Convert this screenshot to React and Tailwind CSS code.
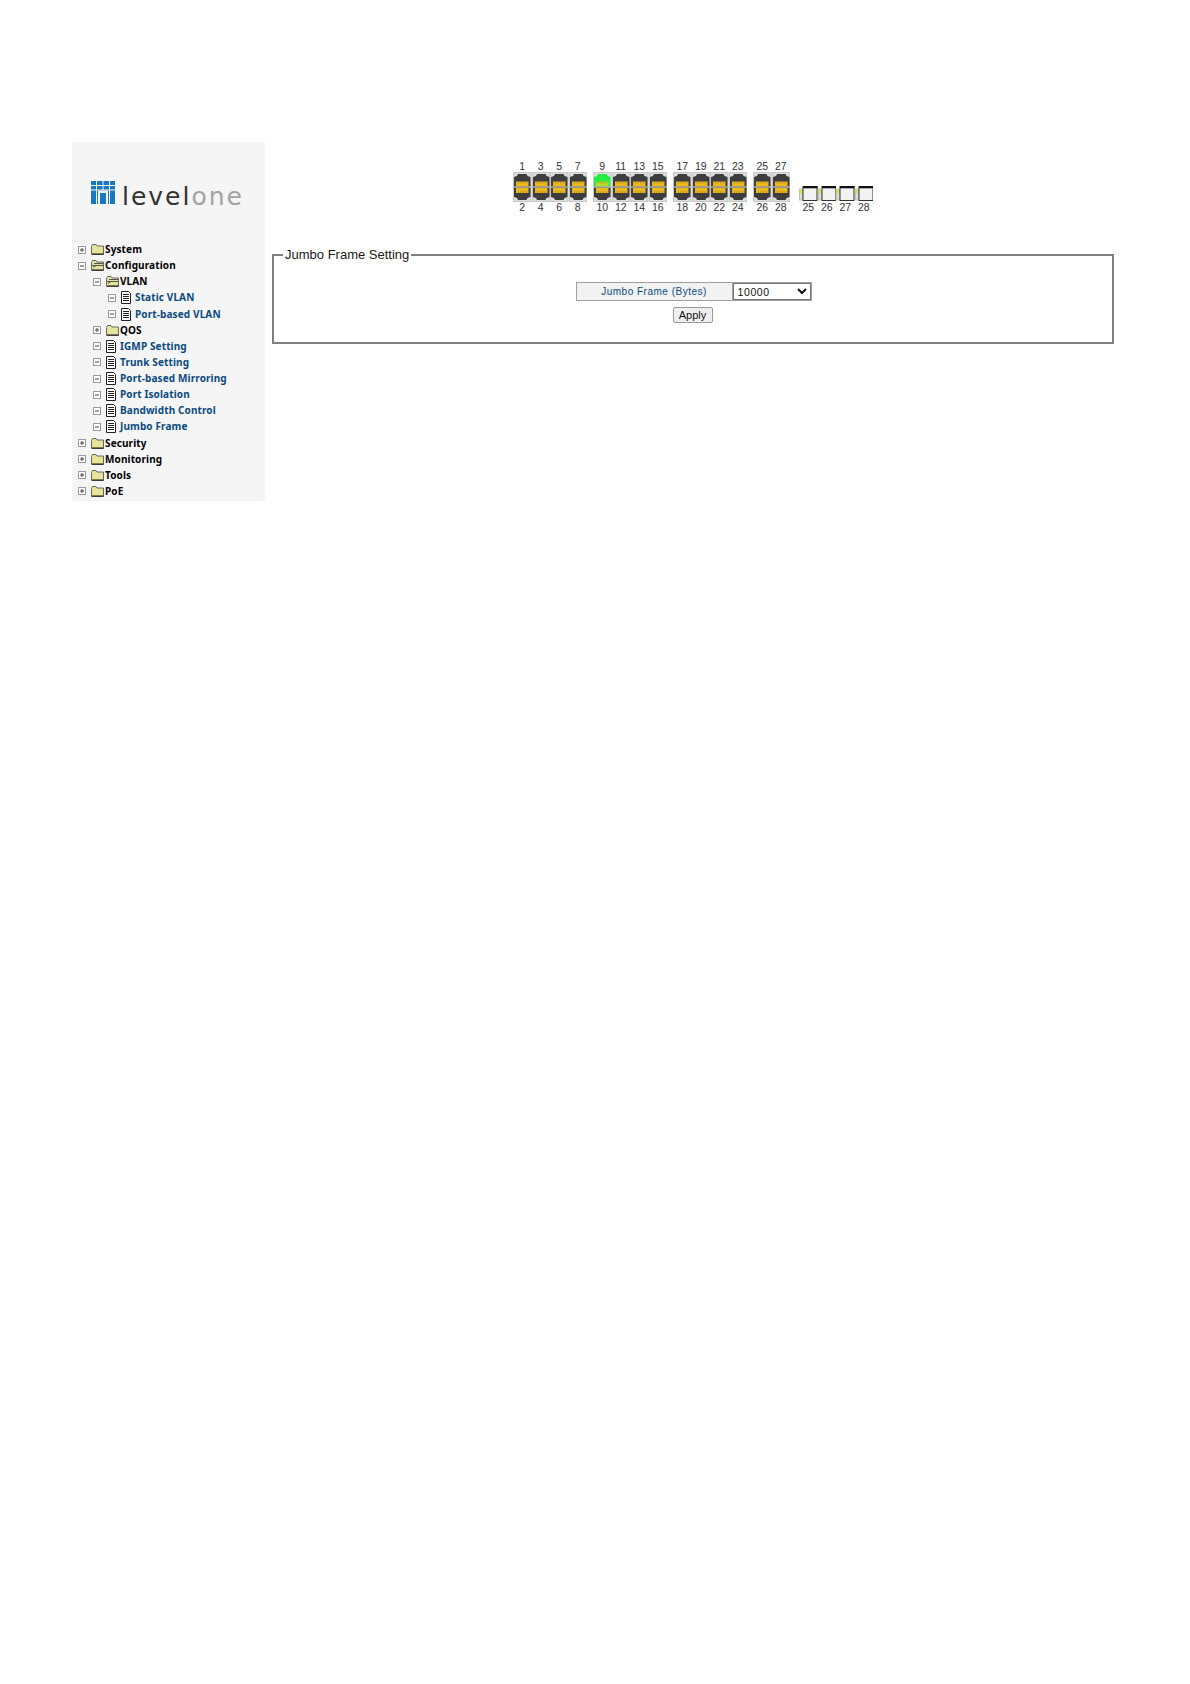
const topPorts = [
  [1, 3, 5, 7],
  [9, 11, 13, 15],
  [17, 19, 21, 23],
  [25, 27],
]
const bottomPorts = [
  [2, 4, 6, 8],
  [10, 12, 14, 16],
  [18, 20, 22, 24],
  [26, 28],
]

const tree = [
  { level: 0, icon: 'closed', box: 'plus', label: 'System' },
  { level: 0, icon: 'open', box: 'minus', label: 'Configuration' },
  { level: 1, icon: 'open', box: 'minus', label: 'VLAN' },
  { level: 2, icon: 'doc', box: 'minus', label: 'Static VLAN', link: true },
  { level: 2, icon: 'doc', box: 'minus', label: 'Port-based VLAN', link: true },
  { level: 1, icon: 'closed', box: 'plus', label: 'QOS' },
  { level: 1, icon: 'doc', box: 'minus', label: 'IGMP Setting', link: true },
  { level: 1, icon: 'doc', box: 'minus', label: 'Trunk Setting', link: true },
  { level: 1, icon: 'doc', box: 'minus', label: 'Port-based Mirroring', link: true },
  { level: 1, icon: 'doc', box: 'minus', label: 'Port Isolation', link: true },
  { level: 1, icon: 'doc', box: 'minus', label: 'Bandwidth Control', link: true },
  { level: 1, icon: 'doc', box: 'minus', label: 'Jumbo Frame', link: true },
  { level: 0, icon: 'closed', box: 'plus', label: 'Security' },
  { level: 0, icon: 'closed', box: 'plus', label: 'Monitoring' },
  { level: 0, icon: 'closed', box: 'plus', label: 'Tools' },
  { level: 0, icon: 'closed', box: 'plus', label: 'PoE' },
]

function LevelOneLogo() {
  return (
    <div className="flex items-end pl-[19px] pt-[39px]">
      <svg width="24" height="23" viewBox="0 0 24 23" className="shrink-0">
        <path d="M0 0h24v23H0z" fill="#1a78c2" />
        <path d="M0 4.5h24M0 9h24M5.5 0v23M12 0v9M18.5 0v23" stroke="#f5f5f5" strokeWidth="1" />
        <path d="M7 9.5h10V23h-2V12H9v11H7z" fill="#f5f5f5" />
      </svg>
      <span className="ml-[7px] mb-[-5px] text-[25px] leading-none tracking-[2px] font-['DejaVu_Sans',sans-serif] text-[#333333]">
        level<span className="text-[#a3a3a3]">one</span>
      </span>
    </div>
  )
}

function TreeBox({ type }) {
  return (
    <svg width="8" height="8" viewBox="0 0 8 8" className="shrink-0">
      <rect x="0.5" y="0.5" width="7" height="7" fill="#fff" stroke="#9a9a9a" />
      <path d={type === 'plus' ? 'M2 4h4M4 2v4' : 'M2 4h4'} stroke="#444" />
    </svg>
  )
}

function FolderIcon({ open }) {
  return (
    <svg width="13" height="11" viewBox="0 0 13 11" className="shrink-0">
      <path d="M0.5 2.5 L1.5 0.5 H5 L6 2 H12.5 V10.5 H0.5 Z" fill="#e6e49a" stroke="#666" />
      {open && <path d="M0.5 5.5 H12.5 M3 3.5 H12 M2 7.5 L5 5.5" stroke="#555" />}
      <path d="M1 10 H12.5" stroke="#111" />
    </svg>
  )
}

function DocIcon() {
  return (
    <svg width="10" height="13" viewBox="0 0 10 13" className="shrink-0">
      <path d="M0.5 0.5 H7.5 L9.5 2.5 V12.5 H0.5 Z" fill="#fff" stroke="#222" />
      <path d="M2 3.5H8M2 5.5H8M2 7.5H8M2 9.5H8" stroke="#222" />
    </svg>
  )
}

function TreeRow({ item }) {
  const indent = ['pl-[6px]', 'pl-[21px]', 'pl-[36px]'][item.level]
  return (
    <div className={`flex items-center h-[16.13px] ${indent}`}>
      <TreeBox type={item.box} />
      {item.icon === 'doc' ? (
        <div className="ml-[5px] w-[14px] flex justify-start">
          <DocIcon />
        </div>
      ) : (
        <div className="ml-[5px] w-[14px]">
          <FolderIcon open={item.icon === 'open'} />
        </div>
      )}
      <span
        className={`text-[10px] font-bold whitespace-nowrap tracking-[0.12px] font-['Noto_Sans',sans-serif] ${item.link ? 'text-[#0a4a80]' : 'text-black'}`}
      >
        {item.label}
      </span>
    </div>
  )
}

function RjPort({ active }) {
  return (
    <svg width="18.5" height="30" viewBox="0 0 18.5 30" className="shrink-0">
      <rect width="18.5" height="30" fill="#dcdcdc" />
      <path d="M0.5 0.5H18V29.5H0.5Z" fill="none" stroke="#c8c8c8" />
      <path d="M5 2 H13.5 L14.5 4 L17.5 5 V14.5 H1 V5 L4 4 Z" fill={active ? '#22ee44' : '#3d3d3d'} />
      <path d="M1 15.5 H17.5 V25 L14.5 26 L13.5 28 H5 L4 26 L1 25 Z" fill="#3d3d3d" />
      <rect x="3" y="9.5" width="12.5" height="5" fill={active ? '#b8d830' : '#ebb81e'} />
      <rect x="3" y="16" width="12.5" height="5" fill="#ebb81e" />
      <path d="M0 15 H18.5" stroke="#a0a0a0" />
      <path d="M5.5 9.5v2M8 9.5v2M10.5 9.5v2M13 9.5v2M5.5 19v2M8 19v2M10.5 19v2M13 19v2" stroke="#8a6a18" strokeWidth="0.5" />
    </svg>
  )
}

function SfpPort() {
  return (
    <svg width="18.5" height="15" viewBox="0 0 18.5 15" className="shrink-0">
      <rect x="0.3" y="3" width="3.2" height="11" fill="#e0e0d0" stroke="#999" strokeWidth="0.5" />
      <rect x="0.8" y="3.5" width="2.2" height="4" fill="#e4e040" />
      <rect x="4" y="0.5" width="14" height="14" fill="#f2f2f2" stroke="#333" />
      <path d="M4 1.2H18.5" stroke="#111" strokeWidth="2.2" />
    </svg>
  )
}

function PortLabels({ groups, sfp }) {
  return (
    <div className={`flex h-[12px] items-center text-[10.5px] leading-none text-[#333333] font-['Liberation_Sans',sans-serif] ${sfp ? 'mt-[-1px]' : ''}`}>
      {groups.map((group, i) => (
        <div key={i} className={`flex ${i > 0 ? 'ml-[6px]' : ''}`}>
          {group.map((n) => (
            <span key={n} className="w-[18.5px] text-center">{n}</span>
          ))}
        </div>
      ))}
      {sfp && (
        <div className="flex ml-[9px]">
          {[25, 26, 27, 28].map((n) => (
            <span key={n} className="w-[18.5px] text-center">{n}</span>
          ))}
        </div>
      )}
    </div>
  )
}

function SwitchPanel() {
  return (
    <div className="flex flex-col items-center pt-[18px] pb-[1px]">
      <div className="flex flex-col w-[360px]">
        <PortLabels groups={topPorts} />
        <div className="flex items-end">
          {topPorts.map((group, i) => (
            <div key={i} className={`flex ${i > 0 ? 'ml-[6px]' : ''}`}>
              {group.map((n) => (
                <RjPort key={n} active={n === 9} />
              ))}
            </div>
          ))}
          <div className="flex ml-[9px] mb-[1px]">
            {[0, 1, 2, 3].map((n) => (
              <SfpPort key={n} />
            ))}
          </div>
        </div>
        <PortLabels groups={bottomPorts} sfp />
      </div>
    </div>
  )
}

function JumboFrameForm() {
  return (
    <fieldset className="mt-[33px] h-[97px] border-2 border-[#808080] pl-[9px] pr-[10px]">
      <legend className="px-[2px] text-[13px] leading-[15px] text-[#1a1a1a] font-['Liberation_Sans',sans-serif]">
        Jumbo Frame Setting
      </legend>
      <div className="flex flex-col items-center pt-[20px]">
        <div className="flex w-[236px] h-[19px] ml-[2px] border border-[#a0a0a0] bg-white">
          <div className="w-[156px] bg-[#f2f2f2] border-r border-[#a0a0a0] flex items-center justify-center text-[10px] tracking-[0.5px] text-[#0a4a80] font-['Liberation_Sans',sans-serif]">
            Jumbo Frame (Bytes)
          </div>
          <select
            defaultValue="10000"
            className="flex-1 h-full border border-[#777777] bg-white text-[10.5px] tracking-[0.6px] text-[#111] font-['Liberation_Sans',sans-serif]"
            style={{ appearance: 'auto' }}
          >
            <option>1518</option>
            <option>10000</option>
          </select>
        </div>
        <button className="mt-[6px] w-[40px] h-[16px] bg-[#efefef] border border-[#9a9a9a] rounded-[2px] text-[11px] leading-none text-[#111] font-['Liberation_Sans',sans-serif]">
          Apply
        </button>
      </div>
    </fieldset>
  )
}

export default function App() {
  return (
    <div className="min-h-[1684px] bg-white pt-[142px] pl-[72px]">
      <div className="flex items-start">
        <aside className="w-[193px] h-[359px] shrink-0 bg-[#f5f5f5] rounded-b-[2px]">
          <div className="h-[99.5px]">
            <LevelOneLogo />
          </div>
          {tree.map((item) => (
            <TreeRow key={item.label} item={item} />
          ))}
        </aside>
        <main className="flex-1 pl-[7px] pr-[76px]">
          <SwitchPanel />
          <JumboFrameForm />
        </main>
      </div>
    </div>
  )
}
